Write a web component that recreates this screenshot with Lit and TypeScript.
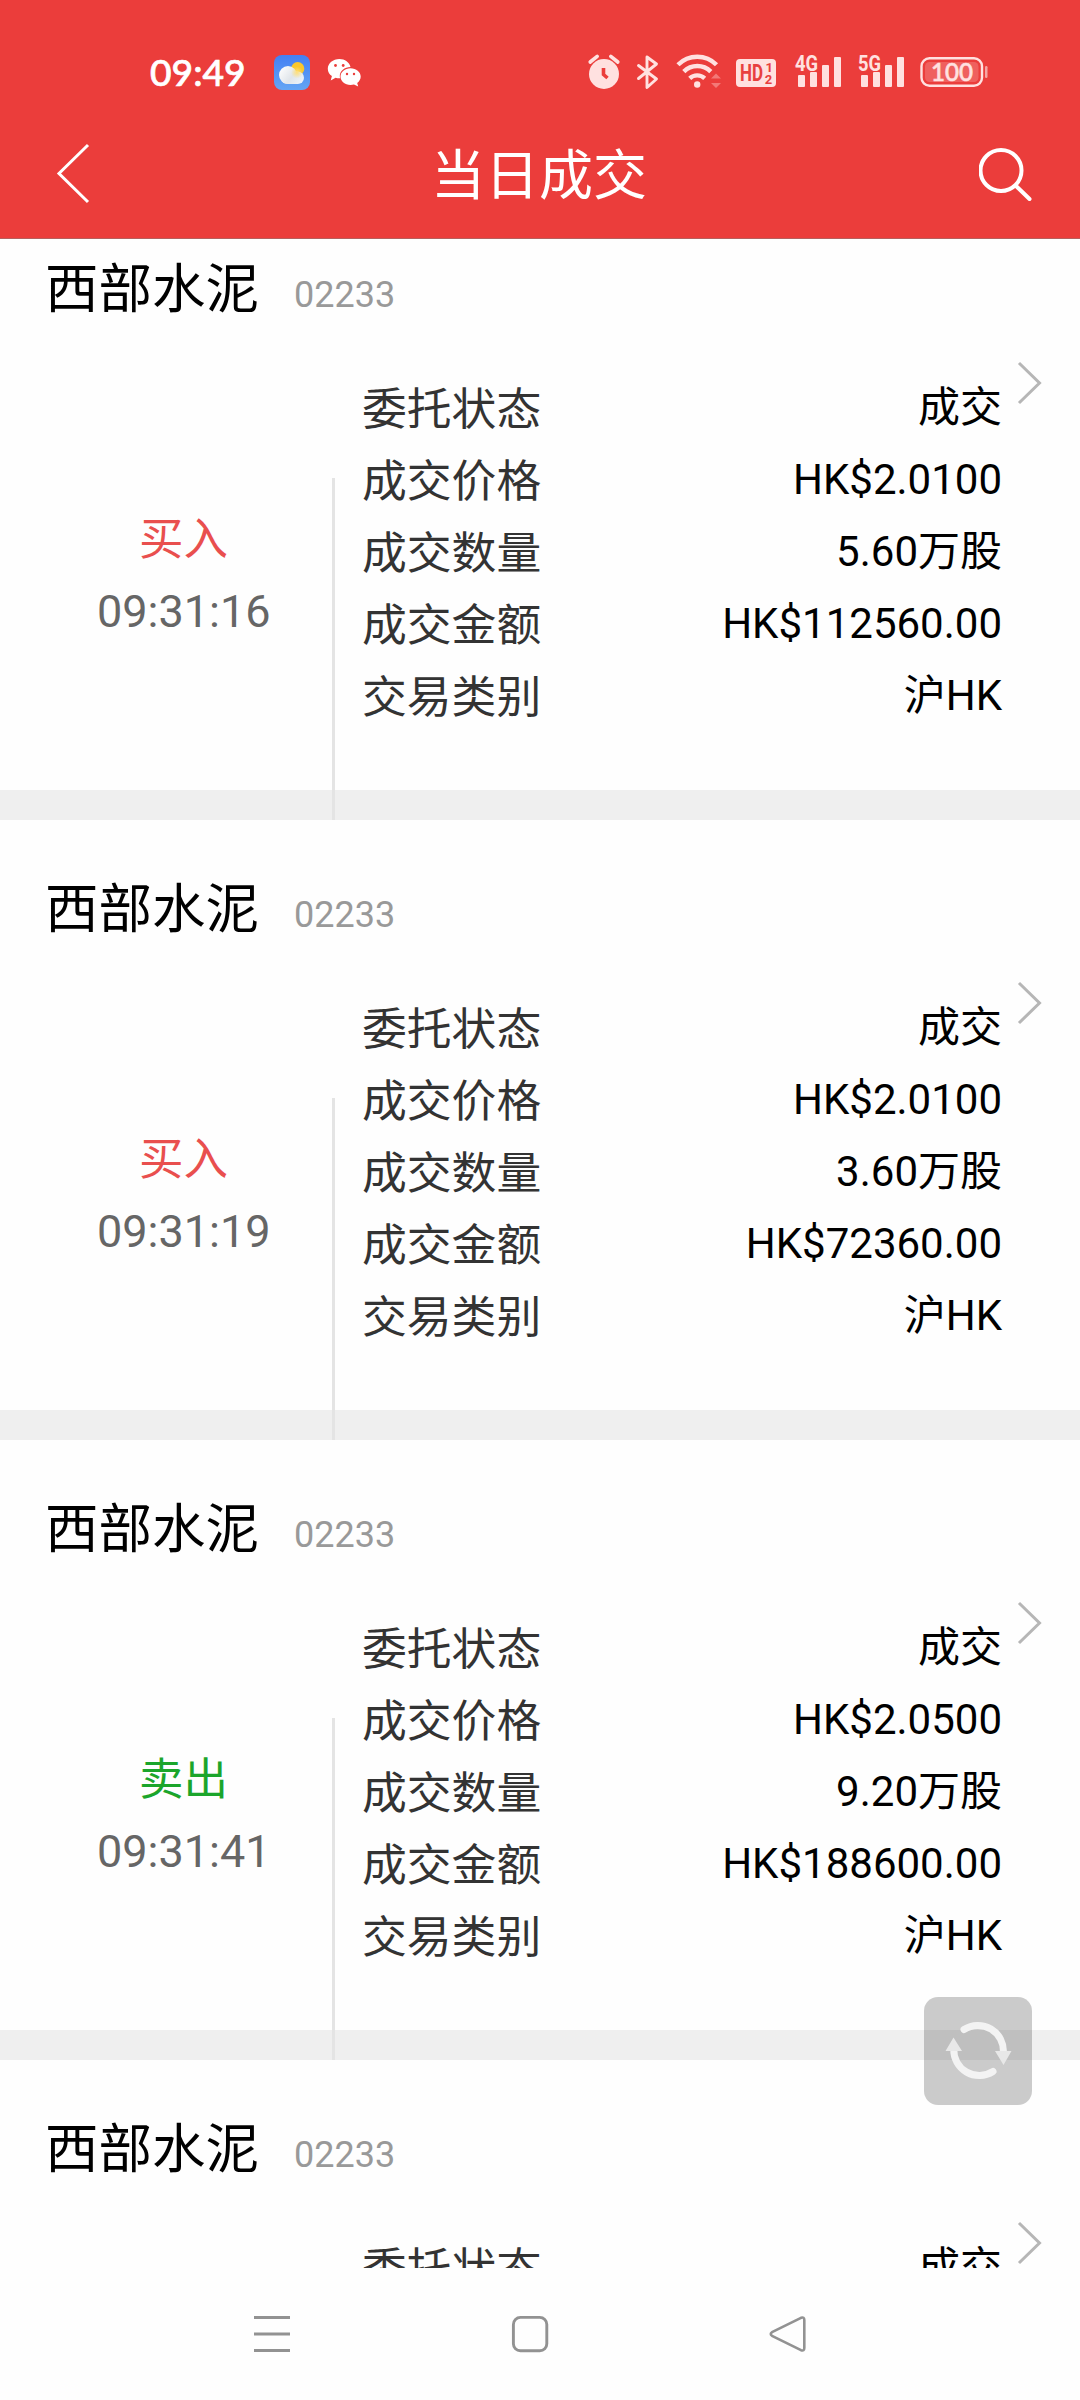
import { LitElement, html, css } from "lit";
import { customElement, property } from "lit/decorators.js";
import { classMap } from "lit/directives/class-map.js";

interface Trade {
  name: string;
  code: string;
  side: "buy" | "sell";
  time: string;
  status: string;
  price: string;
  quantity: string;
  amount: string;
  category: string;
}

const TRADES: Trade[] = [
  { name: "西部水泥", code: "02233", side: "buy", time: "09:31:16", status: "成交", price: "HK$2.0100", quantity: "5.60万股", amount: "HK$112560.00", category: "沪HK" },
  { name: "西部水泥", code: "02233", side: "buy", time: "09:31:19", status: "成交", price: "HK$2.0100", quantity: "3.60万股", amount: "HK$72360.00", category: "沪HK" },
  { name: "西部水泥", code: "02233", side: "sell", time: "09:31:41", status: "成交", price: "HK$2.0500", quantity: "9.20万股", amount: "HK$188600.00", category: "沪HK" },
];

@customElement("status-bar")
class StatusBar extends LitElement {
  static styles = css`
    :host {
      display: flex;
      align-items: flex-start;
      height: 108px;
      padding: 50px 92px 0 150px;
      box-sizing: border-box;
      color: #ffe1e0;
    }
    svg {
      display: block;
      flex: none;
    }
    .clock {
      width: 124px;
      margin-top: -1px;
      font: 500 37.2px/45px Lato, "Noto Sans", sans-serif;
      -webkit-text-stroke: 0.7px #fff;
      color: #fff;
    }
    .spacer {
      flex: 1;
    }
    .weather { width: 36px; margin-right: 17px; }
    .chat { width: 36px; }
    .alarm { width: 34px; margin-right: 15px; }
    .bluetooth { width: 24px; margin-right: 16px; }
    .wifi { width: 46px; margin-right: 13px; }
    .hd { width: 42px; margin-right: 17px; }
    .signal { width: 50px; margin-right: 13px; }
    .battery { width: 68px; }
    .label {
      font-family: Roboto, sans-serif;
      font-weight: 700;
    }
    .charge {
      font-family: Lato, sans-serif;
      font-weight: 500;
      stroke: #ffe1e0;
      stroke-width: 0.6px;
    }
  `;

  private signal(generation: string) {
    return html`<svg class="signal" width="50" height="45" viewBox="0 0 50 45" fill="#ffe1e0">
      <text class="label" x="1" y="20.5" font-size="22" textLength="23" lengthAdjust="spacingAndGlyphs">${generation}</text>
      <rect x="4" y="25" width="7" height="12" rx="1"></rect>
      <rect x="16" y="22" width="7" height="15" rx="1"></rect>
      <rect x="28" y="15" width="7" height="22" rx="1"></rect>
      <rect x="40" y="7" width="7" height="30" rx="1"></rect>
    </svg>`;
  }

  render() {
    return html`
      <span class="clock">09:49</span>
      <svg class="weather" width="36" height="45" viewBox="0 0 36 45">
        <defs>
          <linearGradient id="sky" x1="0" y1="0" x2="0" y2="1"><stop offset="0" stop-color="#437ff3"></stop><stop offset="1" stop-color="#64a5f4"></stop></linearGradient>
          <linearGradient id="cloud" gradientUnits="userSpaceOnUse" x1="6" y1="17" x2="28" y2="34"><stop offset="0" stop-color="#fff"></stop><stop offset=".55" stop-color="#e0e5ea"></stop><stop offset="1" stop-color="#eef4fb"></stop></linearGradient>
          <radialGradient id="glow"><stop offset="0" stop-color="#ffe07a"></stop><stop offset="1" stop-color="#ffe07a" stop-opacity="0"></stop></radialGradient>
        </defs>
        <rect y="5" width="36" height="35" rx="8" fill="url(#sky)"></rect>
        <circle cx="23.7" cy="18.7" r="6.6" fill="#fbc72b"></circle>
        <g fill="url(#cloud)"><circle cx="14" cy="25" r="9"></circle><rect x="7" y="21.500" width="23" height="12.500" rx="6.200"></rect></g>
        <circle cx="23" cy="22.500" r="6" fill="url(#glow)"></circle>
      </svg>
      <svg class="chat" width="36" height="45" viewBox="0 0 36 45" fill="#fff">
        <path d="M12.400 9C6 9 .8 13.300.8 18.700c0 3 1.600 5.600 4.100 7.400l-1.200 4.300 4.900-2.600c1.200.4 2.500.5 3.900.5.6 0 0 0 .6-.1-.2-.7-.3-1.400-.3-2.100 0-5.200 4.700-9.100 10.700-9.200C22.500 12.300 17.900 9 12.400 9z"></path>
        <path d="M23.500 18.200c-5.600 0-10 3.700-10 8.400 0 4.600 4.400 8.300 10 8.300 1.200 0 2.400-.2 3.500-.5l4.200 2.200-1-3.600c2.200-1.500 3.500-3.800 3.500-6.400 0-4.700-4.500-8.400-10.200-8.400z"></path>
        <g fill="#eb3d3b"><circle cx="8.500" cy="15.500" r="1.400"></circle><circle cx="16.200" cy="15.500" r="1.400"></circle><circle cx="20" cy="24" r="1.200"></circle><circle cx="27" cy="24" r="1.200"></circle></g>
      </svg>
      <span class="spacer"></span>
      <svg class="alarm" width="34" height="45" viewBox="0 0 34 45" fill="#ffe1e0">
        <circle cx="17" cy="24" r="15"></circle>
        <path d="M3.200 12l7-5.700M30.800 12l-7-5.700" fill="none" stroke="#ffe1e0" stroke-width="3.600" stroke-linecap="round"></path>
        <path d="M16.500 18v6.500l4 3.500" fill="none" stroke="#eb3d3b" stroke-width="3.600"></path>
      </svg>
      <svg class="bluetooth" width="24" height="45" viewBox="0 0 24 45" fill="none" stroke="#ffe1e0" stroke-width="2.900" stroke-linejoin="round" stroke-linecap="round">
        <path d="M2.500 15.500l18 13.500-9.500 8.500V7l9.500 7L2.500 28.500"></path>
      </svg>
      <svg class="wifi" width="46" height="45" viewBox="0 0 46 45" fill="none" stroke="#ffe1e0" stroke-width="4.400">
        <path d="M2 14.800a27 27 0 0 1 38.500 0M7.800 21.600a19 19 0 0 1 27 0M13.700 28.300a11 11 0 0 1 15 0"></path>
        <circle cx="21.200" cy="34.500" r="3.200" fill="#ffe1e0" stroke="none"></circle>
        <path d="M35 28.500l5-5 5 5zM35 33l5 5 5-5z" fill="#f37977" stroke="none"></path>
      </svg>
      <svg class="hd" width="42" height="45" viewBox="0 0 42 45">
        <rect x="1" y="9" width="40" height="28" rx="4" fill="#ffe1e0"></rect>
        <g class="label" fill="#e8403e">
          <text x="5" y="31" font-size="23" textLength="23" lengthAdjust="spacingAndGlyphs">HD</text>
          <text x="30.500" y="22" font-size="13">1</text>
          <text x="29.800" y="33.600" font-size="13">2</text>
        </g>
      </svg>
      ${this.signal("4G")} ${this.signal("5G")}
      <svg class="battery" width="68" height="45" viewBox="0 0 68 45">
        <rect x="1.500" y="8.200" width="60.500" height="27.600" rx="8" fill="none" stroke="#ffe1e0" stroke-width="2.400"></rect>
        <rect x="5" y="12" width="53.500" height="20" rx="4.500" fill="#ef605e"></rect>
        <rect x="65" y="16" width="2.500" height="12" rx="1.200" fill="#f6a5a4"></rect>
        <text class="charge" x="11" y="31.200" font-size="25" fill="#ffe1e0" textLength="42" lengthAdjust="spacingAndGlyphs">100</text>
      </svg>
    `;
  }
}

@customElement("title-bar")
class TitleBar extends LitElement {
  static styles = css`
    :host {
      display: flex;
      align-items: center;
      justify-content: space-between;
      height: 130px;
      padding: 0 45px 0 51px;
      box-sizing: border-box;
      color: #fff;
      font: 54px/80px Roboto, "Noto Sans CJK SC", sans-serif;
    }
    .title {
      padding: 8px 0 0 0;
    }
    svg {
      display: block;
    }
  `;

  render() {
    return html`
      <svg width="48" height="130" viewBox="0 0 48 130" fill="none" stroke="#fff" stroke-width="3">
        <path d="M37 37L8 65.500 37 94"></path>
      </svg>
      <span class="title">当日成交</span>
      <svg width="56" height="130" viewBox="0 0 56 130" fill="none" stroke="#fff" stroke-width="4" stroke-linecap="round">
        <circle cx="22" cy="62.500" r="20.500"></circle>
        <path d="M36.800 77.800l13.700 13.200"></path>
      </svg>
    `;
  }
}

@customElement("trade-card")
class TradeCard extends LitElement {
  @property({ attribute: false }) trade!: Trade;

  static styles = css`
    :host {
      display: flex;
      flex-direction: column;
      flex: none;
      height: 620px;
      font-family: Roboto, "Noto Sans CJK SC", sans-serif;
      background: linear-gradient(#fefefe 590px, #efefef 590px);
    }
    .head {
      display: flex;
      align-items: flex-start;
      height: 150px;
      padding: 50px 0 0 45px;
      box-sizing: border-box;
      line-height: 80px;
    }
    .name {
      width: 249px;
      font-size: 53.500px;
      color: #000;
    }
    .code {
      margin-top: 5px;
      font-size: 36px;
      color: #999;
    }
    .body {
      display: flex;
      flex: 1;
    }
    .action {
      display: flex;
      flex-direction: column;
      align-items: flex-start;
      width: 332px;
      padding: 154px 0 0 97px;
      box-sizing: border-box;
      font-size: 45px;
      line-height: 72px;
      color: #666;
    }
    .side {
      padding-left: 42px;
      font-size: 44.500px;
    }
    .buy { color: #e94f4e; }
    .sell { color: #1ba52b; }
    .divider {
      width: 3px;
      margin-top: 128px;
      background: #e4e4e4;
    }
    .details {
      flex: 1;
      padding: 21px 0 0 27px;
    }
    .row {
      display: flex;
      justify-content: space-between;
      align-items: flex-start;
      height: 72px;
    }
    .label {
      font-size: 44.800px;
      line-height: 77px;
      color: #333;
    }
    .value {
      font-size: 42px;
      line-height: 74px;
      color: #000;
    }
    .more {
      display: block;
      width: 78px;
      height: 66px;
    }
  `;

  render() {
    const t = this.trade;
    const rows = [
      ["委托状态", t.status],
      ["成交价格", t.price],
      ["成交数量", t.quantity],
      ["成交金额", t.amount],
      ["交易类别", t.category],
    ];
    return html`
      <div class="head"><span class="name">${t.name}</span><span class="code">${t.code}</span></div>
      <div class="body">
        <div class="action">
          <span class=${classMap({ side: true, buy: t.side === "buy", sell: t.side === "sell" })}>${t.side === "buy" ? "买入" : "卖出"}</span>
          <span>${t.time}</span>
        </div>
        <div class="divider"></div>
        <div class="details">
          ${rows.map(([label, value]) => html`<div class="row"><span class="label">${label}</span><span class="value">${value}</span></div>`)}
        </div>
        <svg class="more" viewBox="0 0 78 66" fill="none" stroke="#b6b6b6" stroke-width="3">
          <path d="M17 13l20.500 20L17 53"></path>
        </svg>
      </div>
    `;
  }
}

@customElement("app-root")
class AppRoot extends LitElement {
  static styles = css`
    :host {
      display: flex;
      flex-direction: column;
      width: 1080px;
      height: 2400px;
      overflow: hidden;
      position: relative;
      background: #fefefe;
    }
    .header {
      flex: none;
      height: 239px;
      box-sizing: border-box;
      border-bottom: 1px solid #b5605e;
      background: #eb3d3b;
    }
    .list {
      display: flex;
      flex-direction: column;
      height: 2029px;
      flex: none;
      overflow: hidden;
    }
    .first {
      margin-top: -39px;
    }
    .refresh {
      position: absolute;
      left: 924px;
      top: 1997px;
      width: 108px;
      height: 108px;
      border-radius: 14px;
      background: rgba(0, 0, 0, 0.2);
    }
    .nav {
      display: flex;
      flex: 1;
      align-items: center;
      justify-content: space-between;
      padding: 0 272px 0 252px;
    }
    svg {
      display: block;
    }
  `;

  render() {
    return html`
      <div class="header"><status-bar></status-bar><title-bar></title-bar></div>
      <div class="list">
        ${[...TRADES, TRADES[2]].map((t, i) => html`<trade-card class=${classMap({ first: i === 0 })} .trade=${t}></trade-card>`)}
      </div>
      <div class="nav">
        <svg width="40" height="40" viewBox="0 0 40 40" stroke="#929292" stroke-width="3.200"><path d="M2 3.500h36M2 20h36M2 36.500h36"></path></svg>
        <svg width="40" height="40" viewBox="0 0 40 40" fill="none" stroke="#929292" stroke-width="2.900"><rect x="3.400" y="3.400" width="33.400" height="33.400" rx="7"></rect></svg>
        <svg width="40" height="40" viewBox="0 0 40 40" fill="none" stroke="#929292" stroke-width="2.600" stroke-linejoin="round"><path d="M4 18.200L33 3.800Q36.300 2.600 36.300 6V34Q36.300 37.400 33 36.200L4 21.800Q1.500 20 4 18.200z"></path></svg>
      </div>
      <div class="refresh">
        <svg width="108" height="108" viewBox="0 0 108 108" fill="none" stroke="#f3f3f3" stroke-width="7" stroke-linecap="round">
          <path d="M40 32.500A25.500 25.500 0 0 1 79.300 56"></path>
          <path d="M69 74.500A25.500 25.500 0 0 1 29.800 52"></path>
          <path d="M71 54h16.500l-8 14zM21.500 54h16.500l-8.500-13.500z" fill="#e8e8e8" stroke="none"></path>
        </svg>
      </div>
    `;
  }
}
